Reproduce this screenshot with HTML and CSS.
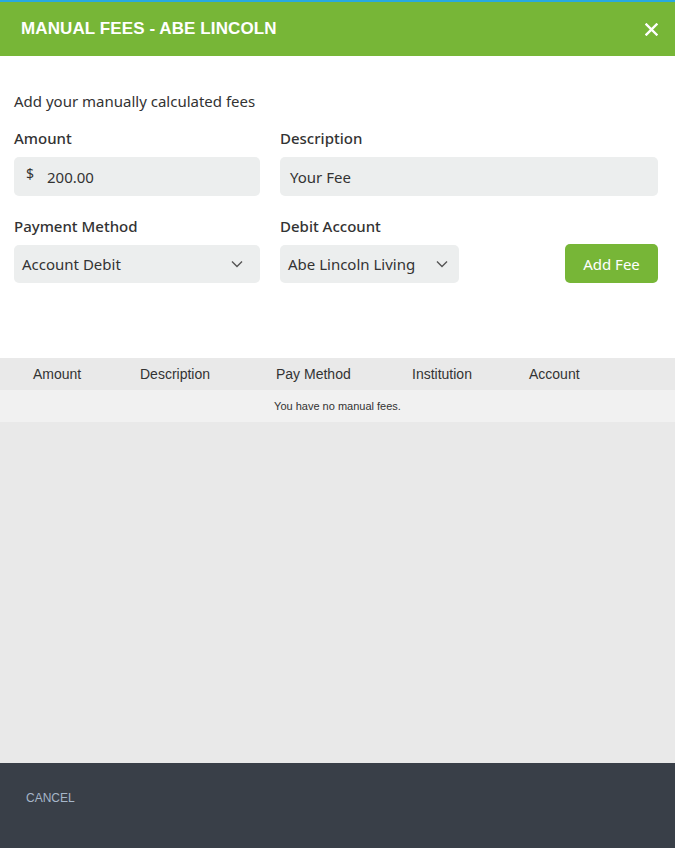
FILE: index.html
```html
<!DOCTYPE html>
<html lang="en">

<head>
    <meta charset="UTF-8">
    <meta name="viewport" content="width=device-width, initial-scale=1.0">
    <title>Manual Fees</title>
    <link rel="stylesheet" href="styles.css">
</head>

<body>
    <div class="modal">
        <div class="modal-header">
            <h1 class="title">MANUAL FEES - ABE LINCOLN</h1>
            <svg class="close" width="13" height="13" viewBox="0 0 13 13">
                <path d="M1.5 1.5 L11.5 11.5 M11.5 1.5 L1.5 11.5" stroke="#fff" stroke-width="2.4" stroke-linecap="square"/>
            </svg>
        </div>

        <div class="modal-body">
            <p class="intro">Add your manually calculated fees</p>

            <div class="form-row">
                <div class="field field-half">
                    <label>Amount</label>
                    <div class="input money"><span class="currency">$</span>200.00</div>
                </div>
                <div class="field field-wide">
                    <label>Description</label>
                    <div class="input">Your Fee</div>
                </div>
            </div>

            <div class="form-row">
                <div class="field field-half">
                    <label>Payment Method</label>
                    <div class="input select">
                        <span>Account Debit</span>
                        <svg width="12" height="8" viewBox="0 0 12 8"><path d="M1 1.5 L6 6.5 L11 1.5" fill="none" stroke="#555" stroke-width="1.4"/></svg>
                    </div>
                </div>
                <div class="field field-account">
                    <label>Debit Account</label>
                    <div class="input select">
                        <span>Abe Lincoln Living</span>
                        <svg width="12" height="8" viewBox="0 0 12 8"><path d="M1 1.5 L6 6.5 L11 1.5" fill="none" stroke="#555" stroke-width="1.4"/></svg>
                    </div>
                </div>
                <button class="btn-add">Add Fee</button>
            </div>
        </div>

        <div class="fees">
            <div class="fees-head">
                <span>Amount</span>
                <span>Description</span>
                <span>Pay Method</span>
                <span>Institution</span>
                <span>Account</span>
            </div>
            <div class="fees-empty">You have no manual fees.</div>
        </div>

        <div class="modal-footer">
            <a class="cancel">CANCEL</a>
        </div>
    </div>
</body>

</html>
```

FILE: styles.css
```css
html,
body {
    margin: 0;
    padding: 0;
}

body {
    font-family: "Noto Sans", "Liberation Sans", sans-serif;
    color: #333;
}

.modal {
    width: 675px;
    height: 848px;
    display: flex;
    flex-direction: column;
    background: #e9e9e9;
}

.modal-header {
    height: 54px;
    border-top: 2px solid #27a9e1;
    background: #77b637;
    display: flex;
    align-items: center;
    justify-content: space-between;
    padding: 0 17px 0 21px;
}

.title {
    margin: 0 0 1px;
    color: #fff;
    font-family: "Liberation Sans", Arial, sans-serif;
    font-size: 17px;
    font-weight: bold;
    letter-spacing: 0.1px;
}

.close {
    margin-top: 1px;
}

.modal-body {
    background: #fff;
    height: 302px;
    box-sizing: border-box;
    padding: 0 17px 0 14px;
}

.intro {
    margin: 0;
    padding-top: 35px;
    font-size: 15px;
    line-height: 20px;
    color: #333;
}

.form-row {
    display: flex;
    align-items: flex-end;
    gap: 20px;
}

.form-row:first-of-type {
    margin-top: 17px;
}

.form-row + .form-row {
    margin-top: 20px;
}

.field label {
    display: block;
    font-size: 15px;
    font-weight: 500;
    line-height: 20px;
    margin-bottom: 9px;
    color: #333;
}

.field-half {
    width: 246px;
}

.field-wide {
    width: 378px;
}

.field-account {
    width: 179px;
}

.input {
    height: 39px;
    box-sizing: border-box;
    background: #eceeee;
    border-radius: 5px;
    font-size: 15px;
    color: #333;
    display: flex;
    align-items: center;
    padding: 0 10px;
}

.form-row + .form-row .input {
    height: 38px;
}

.money {
    padding-left: 12px;
}

.currency {
    font-size: 14px;
    margin-right: 13px;
    position: relative;
    top: -3px;
}

.select {
    justify-content: space-between;
    padding: 0 17px 0 8px;
}

.field-account .select {
    padding-right: 11px;
}

.btn-add {
    margin-left: auto;
    width: 93px;
    height: 39px;
    margin-bottom: 0;
    border: none;
    border-radius: 5px;
    background: #77b637;
    color: #fff;
    font-family: "Noto Sans", "Liberation Sans", sans-serif;
    font-size: 15px;
}

.fees {
    flex: 1;
    background: #e9e9e9;
}

.fees-head {
    height: 32px;
    display: grid;
    grid-template-columns: 107px 136px 136px 117px 1fr;
    align-items: center;
    padding-left: 33px;
    font-family: "Liberation Sans", Arial, sans-serif;
    font-size: 14px;
    color: #333;
}

.fees-empty {
    height: 32px;
    line-height: 32px;
    background: #f1f1f1;
    text-align: center;
    font-family: "Liberation Sans", Arial, sans-serif;
    font-size: 11px;
    color: #333;
}

.modal-footer {
    height: 85px;
    background: #393f48;
    display: flex;
    align-items: flex-start;
    padding: 28px 0 0 26px;
    box-sizing: border-box;
}

.cancel {
    color: #a6b6c9;
    font-family: "Liberation Sans", Arial, sans-serif;
    font-size: 12px;
}
```
